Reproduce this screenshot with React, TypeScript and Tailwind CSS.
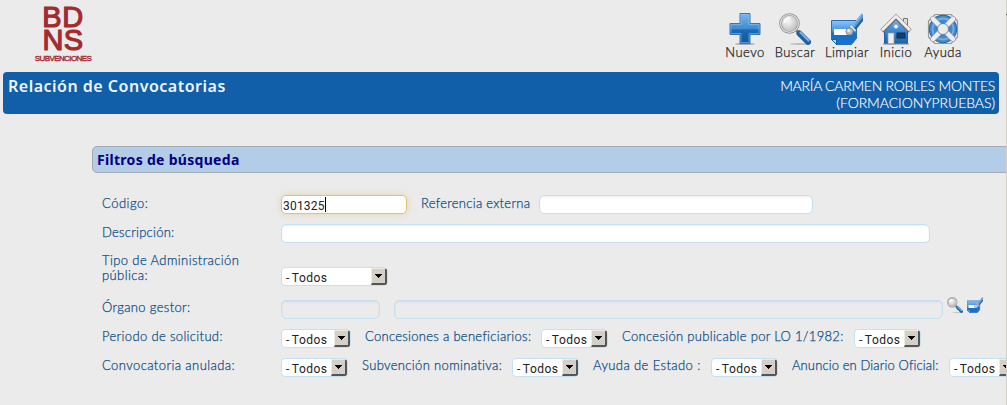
import React from "react";

function Plus() {
  return (
    <svg width="32" height="32" viewBox="0 0 32 32">
      <defs>
        <linearGradient id="plus" x1="0" y1="0" x2="0" y2="1">
          <stop offset="0" stopColor="#7db7ea" />
          <stop offset="0.5" stopColor="#3f8bd3" />
          <stop offset="0.55" stopColor="#1e68b4" />
          <stop offset="1" stopColor="#0d559f" />
        </linearGradient>
      </defs>
      <ellipse cx="16" cy="31" rx="10" ry="1" fill="#a9a9a9" />
      <path d="M11 .5h10v10h10v11H21v9H11v-9H1v-11h10z" fill="url(#plus)" stroke="#3278bb" />
      <path d="M12 1.5h8v10h10v9H20v9h-8v-9H2v-9h10z" fill="none" stroke="#8fc3f0" strokeOpacity=".55" />
    </svg>
  );
}

function Magnifier({ size = 32 }: { size?: number }) {
  return (
    <svg width={size} height={size} viewBox="0 0 32 32">
      <defs>
        <radialGradient id="lens" cx=".4" cy=".35" r=".7">
          <stop offset="0" stopColor="#fafafa" />
          <stop offset="1" stopColor="#b5b5b5" />
        </radialGradient>
      </defs>
      <ellipse cx="21" cy="31" rx="10" ry="1" fill="#c0c0c0" />
      <path d="M17 17l4 4" stroke="#777" strokeWidth="3" />
      <path d="M20.5 20.5l8.500 8.500" stroke="#245f9e" strokeWidth="6" strokeLinecap="round" />
      <path d="M21.5 19.5l8 8" stroke="#7bb2e2" strokeWidth="2.200" strokeLinecap="round" />
      <circle cx="10.5" cy="10.5" r="9" fill="url(#lens)" stroke="#8b8b8b" strokeWidth="2.600" />
      <circle cx="10.5" cy="10.5" r="8.900" fill="none" stroke="#dedede" strokeWidth="1.300" />
      <path d="M5 10a6 6 0 016-5" fill="none" stroke="#fff" strokeWidth="1.500" />
    </svg>
  );
}

function Clear({ size = 32 }: { size?: number }) {
  return (
    <svg width={size} height={size} viewBox="0 0 32 32">
      <defs>
        <linearGradient id="sheet" x1="0" y1="0" x2="0" y2="1">
          <stop offset="0" stopColor="#8cc4f5" />
          <stop offset=".45" stopColor="#3f92e0" />
          <stop offset=".55" stopColor="#1570c8" />
          <stop offset="1" stopColor="#1673ce" />
        </linearGradient>
      </defs>
      <path d="M.5 7.5h25v18l-5 6H5.5l-5-5z" fill="url(#sheet)" stroke="#2b6fb2" />
      <path d="M.5 26.5h5v5z" fill="#b6d9f8" stroke="#215f9e" />
      <rect x="3" y="16" width="15" height="6" fill="#fff" />
      <path d="M20 18.500L33 2.500" stroke="#2f608f" strokeWidth="5.500" />
      <path d="M20 16.500L32 1.500" stroke="#5a9ddb" strokeWidth="3.600" />
      <path d="M20 15L31 1" stroke="#9cc8ee" strokeWidth="1" />
      <path d="M19.500 13l5 5" stroke="#d7e6f4" strokeWidth="2" />
      <circle cx="18.5" cy="18.5" r="3.600" fill="#bdbdbd" stroke="#6f7d8b" strokeWidth=".8" />
      <circle cx="17.6" cy="17.6" r="1.500" fill="#eee" />
    </svg>
  );
}

function House() {
  return (
    <svg width="32" height="32" viewBox="0 0 32 32">
      <defs>
        <linearGradient id="wall" x1="0" y1="0" x2="0" y2="1">
          <stop offset="0" stopColor="#85bdf0" />
          <stop offset=".5" stopColor="#3c8ad3" />
          <stop offset="1" stopColor="#1b63ab" />
        </linearGradient>
      </defs>
      <path d="M23.5 5.5h4v8l-4-4z" fill="#ddd" stroke="#777" />
      <path d="M4.5 30.5V15L16 4l11.500 11v15.500z" fill="url(#wall)" stroke="#245d98" />
      <path d="M2 18L16 4l14 14" fill="none" stroke="#747474" strokeWidth="4.600" />
      <path d="M2 17.300L16 3.300l14 14" fill="none" stroke="#eee" strokeWidth="2.800" />
      <circle cx="16" cy="13.5" r="2.300" fill="#e8f3fc" stroke="#6e9dc9" strokeWidth=".7" />
      <rect x="8" y="20" width="6" height="11" fill="#eee" stroke="#999" strokeWidth=".7" />
      <rect x="17" y="20" width="8" height="5" fill="#133d6b" stroke="#0f3157" />
      <path d="M3 31h26" stroke="#888" />
    </svg>
  );
}

function Lifebuoy() {
  return (
    <svg width="32" height="32" viewBox="0 0 32 32">
      <path d="M8 1.500h16l6.500 6.500v16L24 30.500H8L1.500 24V8z" fill="none" stroke="#999" strokeWidth="1.200" strokeLinejoin="round" />
      <circle cx="16" cy="16" r="9.700" fill="none" stroke="#2767a9" strokeWidth="9" />
      <circle cx="16" cy="16" r="9.700" fill="none" stroke="#4388cb" strokeWidth="7" />
      <circle cx="16" cy="16" r="10.500" fill="none" stroke="#72aee5" strokeWidth="1.800" />
      <path d="M6 6l6.500 6.500M26 6l-6.500 6.500M6 26l6.500-6.500M26 26l-6.500-6.500" stroke="#8f9aa5" strokeWidth="5.800" strokeLinecap="round" />
      <path d="M6 6l6.500 6.500M26 6l-6.500 6.500M6 26l6.500-6.500M26 26l-6.500-6.500" stroke="#ededed" strokeWidth="4.500" strokeLinecap="round" />
      <circle cx="16" cy="16" r="5.500" fill="#ebebeb" stroke="#5583b2" strokeWidth=".9" />
    </svg>
  );
}

function Tool({ label, className, children }: { label: string; className: string; children: React.ReactNode }) {
  return (
    <button className={`flex shrink-0 flex-col items-center ${className}`}>
      {children}
      <span className="-mt-px whitespace-nowrap text-[13px] font-light leading-4 tracking-[0.45px] text-[#222] [-webkit-text-stroke:0.25px_#222]">{label}</span>
    </button>
  );
}

function Label({ className, children }: { className: string; children: React.ReactNode }) {
  return <span className={`shrink-0 whitespace-nowrap text-[13px] font-light leading-[15px] text-[#0f4f86] [-webkit-text-stroke:0.25px_#0f4f86] ${className}`}>{children}</span>;
}

const field = "h-[19px] shrink-0 rounded-[5px] border border-[#c4e1f1] shadow-[inset_0_1px_2px_rgba(0,0,0,0.08)]";

function Select({ className }: { className: string }) {
  return (
    <div className={`flex h-[19px] shrink-0 items-center justify-between overflow-hidden rounded-[4px] border border-[#c4e1f1] bg-white font-[Roboto,sans-serif] text-[12px] text-[#222] ${className}`}>
      <span className="whitespace-nowrap pl-[4px] pt-[3px] leading-4 tracking-[0.5px]">-<span className="pl-[2px]">Todos</span></span>
      <span className="flex h-[17px] w-4 shrink-0 items-center justify-center border border-b-2 border-r-2 border-t-[#eeeae4] border-l-[#eeeae4] border-r-[#555] border-b-[#555] bg-[#d4d0c8]">
        <svg width="7" height="4" viewBox="0 0 7 4" shapeRendering="crispEdges"><path d="M0 0h7v1H0zM1 1h5v1H1zM2 2h3v1H2zM3 3h1v1H3z" fill="#000" /></svg>
      </span>
    </div>
  );
}

export default function App() {
  return (
    <div className="flex h-[405px] w-[1007px] overflow-hidden bg-[#ebebeb] font-[Lato,sans-serif]">
      <div className="flex w-[1006px] shrink-0 flex-col overflow-hidden">
        <header className="flex h-[72px] shrink-0 justify-between pl-[33px] pr-[42px]">
          <div className="flex w-[60px] flex-col items-center pt-[6px] font-['Liberation_Sans',sans-serif] text-[#a52a2d]">
            <span className="text-[29px] leading-[23px] tracking-[0.6px] [-webkit-text-stroke:1.2px_#a52a2d]">BD</span>
            <span className="text-[29px] leading-[23px] tracking-[0.3px] [-webkit-text-stroke:1.2px_#a52a2d]">NS</span>
            <span className="text-[8px] leading-[13px] tracking-[-0.6px] [-webkit-text-stroke:0.4px_#a52a2d]">SUBVENCIONES</span>
          </div>
          <nav className="flex pt-[13px]">
            <Tool label="Nuevo" className="w-[42px]"><Plus /></Tool>
            <Tool label="Buscar" className="ml-[8px] w-[42px]"><Magnifier /></Tool>
            <Tool label="Limpiar" className="ml-[9px] w-[44px]"><Clear /></Tool>
            <Tool label="Inicio" className="ml-[9px] w-[36px]"><House /></Tool>
            <Tool label="Ayuda" className="ml-[8px] w-[42px]"><Lifebuoy /></Tool>
          </nav>
        </header>

        <div className="ml-[3px] flex h-[42px] w-[996px] shrink-0 justify-between rounded-[4px] bg-[#115fa9] pl-[5px] pr-[4px] text-[#f0f4f8]">
          <h1 className="pt-[4px] font-['Noto_Sans',sans-serif] text-[16px] font-semibold leading-[20px] tracking-[0.5px]">Relación de Convocatorias</h1>
          <div className="pt-[5px] text-right text-[14px] font-light leading-[17px] text-white [-webkit-text-stroke:0.15px_#fff]">
            <p className="tracking-[-0.27px]">MARÍA CARMEN ROBLES MONTES</p>
            <p className="tracking-[-0.05px]">(FORMACIONYPRUEBAS)</p>
          </div>
        </div>

        <section className="ml-[92px] mt-[32px] flex w-[930px] shrink-0 flex-col">
          <h2 className="h-[27px] rounded-[5px] border border-[#a3abb3] bg-[#b3cce8] pl-[4px] font-['Noto_Sans',sans-serif] text-[14px] font-bold leading-[26px] tracking-[0.3px] text-[#000080]">Filtros de búsqueda</h2>

          <div className="ml-[10px] mt-[22px] flex h-[19px]">
            <Label className="w-[179px] pt-px tracking-[0.5px]">Código:</Label>
            <div className="flex h-[19px] w-[126px] shrink-0 items-center rounded-[5px] border border-[#dfc27d] bg-white pl-[1px] font-[Roboto,sans-serif] text-[12px] text-[#222] shadow-[0_0_6px_rgba(225,190,100,0.5)]">
              <span className="pt-[3px] leading-4 tracking-[0.2px]">301325</span>
              <span className="h-[15px] w-px bg-black" />
            </div>
            <Label className="ml-[14px] w-[118px] pt-px tracking-[0.28px]">Referencia externa</Label>
            <div className={`w-[274px] bg-white ${field}`} />
          </div>

          <div className="ml-[10px] mt-[10px] flex h-[19px]">
            <Label className="w-[179px] pt-px tracking-[0.25px]">Descripción:</Label>
            <div className={`w-[649px] bg-white ${field}`} />
          </div>

          <div className="ml-[10px] mt-[10px] flex h-[34px] items-start">
            <Label className="w-[179px] tracking-[0.4px]">Tipo de Administración<br />pública:</Label>
            <div className="pt-[14px]"><Select className="w-[107px]" /></div>
          </div>

          <div className="ml-[10px] mt-[13px] flex h-[19px]">
            <Label className="w-[179px] tracking-[0.35px]">Órgano gestor:</Label>
            <div className={`w-[99px] ${field}`} />
            <div className={`ml-[14px] w-[549px] ${field}`} />
            <div className="-mt-[3px] ml-[4px] flex shrink-0 gap-[4px]">
              <Magnifier size={16} />
              <Clear size={16} />
            </div>
          </div>

          <div className="ml-[10px] mt-[10px] flex h-[19px]">
            <Label className="w-[179px] tracking-[0.35px]">Periodo de solicitud:</Label>
            <Select className="w-[70px]" />
            <Label className="ml-[14px] w-[176px] tracking-[0.29px]">Concesiones a beneficiarios:</Label>
            <Select className="w-[67px]" />
            <Label className="ml-[14px] w-[232px] tracking-[0.31px]">Concesión publicable por LO 1/1982:</Label>
            <Select className="w-[67px]" />
          </div>

          <div className="ml-[10px] mt-[10px] flex h-[19px]">
            <Label className="w-[179px] tracking-[0.42px]">Convocatoria anulada:</Label>
            <Select className="w-[67px]" />
            <Label className="ml-[14px] w-[150px] tracking-[0.35px]">Subvención nominativa:</Label>
            <Select className="w-[67px]" />
            <Label className="ml-[14px] w-[118px] tracking-[0.4px]">Ayuda de Estado :</Label>
            <Select className="w-[67px]" />
            <Label className="ml-[14px] w-[157px] tracking-[0.12px]">Anuncio en Diario Oficial:</Label>
            <Select className="w-[67px]" />
          </div>
        </section>
      </div>
      <div className="flex w-px shrink-0 flex-col bg-[#d4cfc6] pt-[14px]">
        <div className="h-px bg-[#333]" />
      </div>
    </div>
  );
}
